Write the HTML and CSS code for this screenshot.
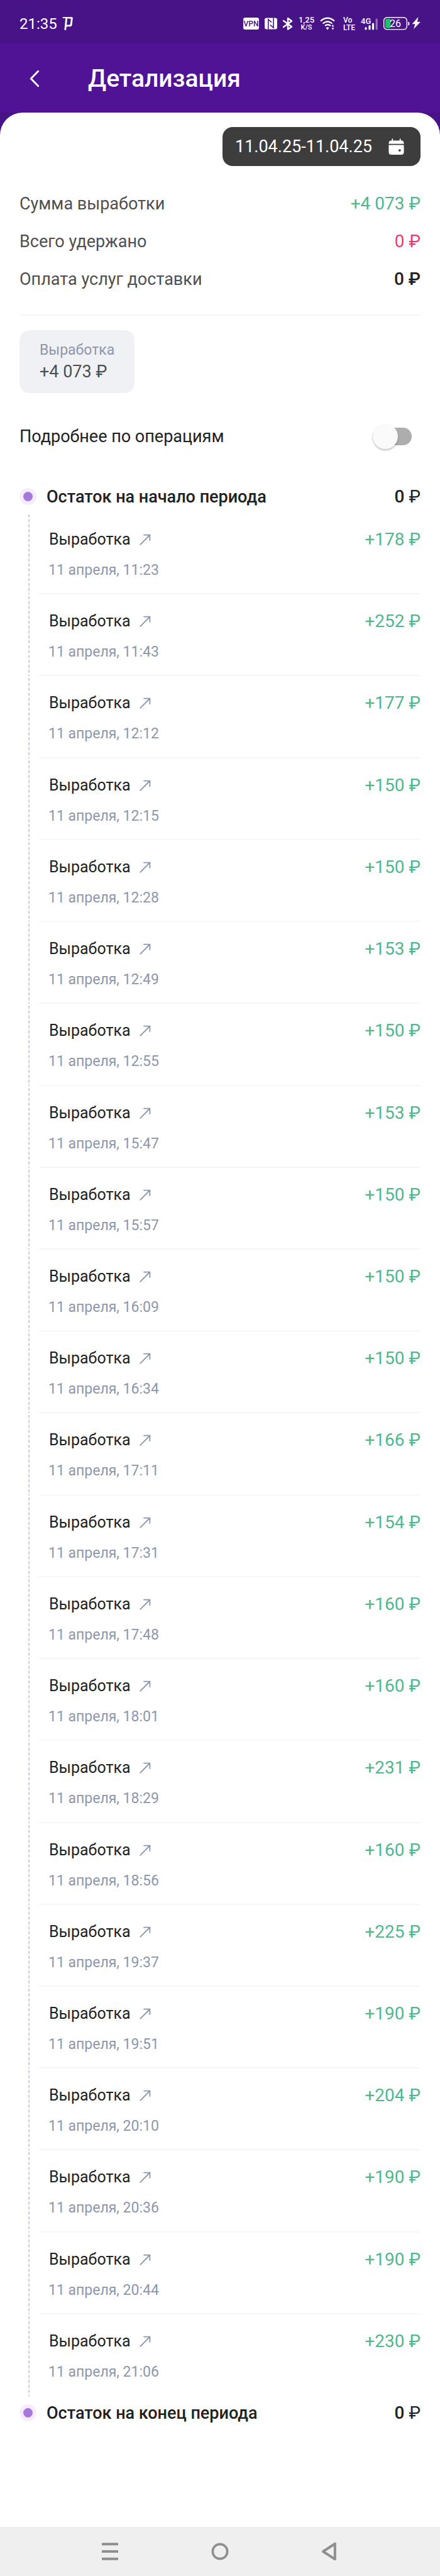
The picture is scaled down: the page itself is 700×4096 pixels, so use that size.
FILE: index.html
```
<!DOCTYPE html>
<html lang="ru">
<head>
    <meta charset="UTF-8">
    <meta name="viewport" content="width=device-width, initial-scale=1.0">
    <title>Детализация</title>
    <link rel="stylesheet" href="styles.css">
</head>
<body>

    <svg class="sprite" aria-hidden="true">
        <symbol id="arrow" viewBox="0 0 18 18">
            <path d="M1.2 16.8 16 2M7 1.6h9.4V10" fill="none" stroke="currentColor" stroke-width="1.8" stroke-linecap="round"/>
        </symbol>
    </svg>

    <div class="status">
        <span class="clock">21:35</span>
        <svg class="status-logo" width="18" height="24" viewBox="0 0 18 24">
            <path d="M0 3 1.6 1H15q2 0 1.8 2L15.6 13.500q-.3 2.700-3 2.700H6.800L6.200 21.800H3.400L5.200 3zM8 3.600 7.100 13.400h4.200q1.400 0 1.600-1.400l.8-7q.1-1.400-1.300-1.400z" fill="#fff" fill-rule="evenodd"/>
        </svg>
        <div class="status-icons">
            <svg width="25" height="24" viewBox="0 0 25 24">
                <rect y="2" width="25" height="19" rx="3" fill="#fff"/>
                <text x="12.500" y="16" class="vpn">VPN</text>
            </svg>
            <svg width="20" height="24" viewBox="0 0 20 24">
                <rect y="2.500" width="20" height="18" rx="3" fill="#fff"/>
                <path d="M5.800 20.500V5L11 9.400M14.100 2.500V18L8.800 13.600" fill="none" stroke="#491388" stroke-width="1.600"/>
            </svg>
            <svg width="16" height="24" viewBox="0 0 16 24">
                <path d="M1 7 14 16.500 8 20.500V3L14 7.500 1 17" fill="none" stroke="#fff" stroke-width="2.400" stroke-linejoin="round" stroke-linecap="round"/>
            </svg>
            <div class="stack stack-speed"><b>1,25</b><small>K/S</small></div>
            <svg class="wifi" width="28" height="24" viewBox="0 0 28 24">
                <path d="M1 7.500Q12 -2 23 7.500M4.500 11.500Q12 5 19.500 11.500M8 15Q12.500 11.500 17 15" fill="none" stroke="#fff" stroke-width="2.300"/>
                <path d="M9.500 18.300Q12 16 14.500 18.300L12 21.500zM18.500 16.200 20.500 12.800 22.500 16.200zM18.500 18.200 20.500 21.600 22.500 18.200z" fill="#fff"/>
            </svg>
            <div class="stack"><b>Vo</b><b>LTE</b></div>
            <svg width="27" height="24" viewBox="0 0 27 24">
                <text x="0" y="12" class="net">4G</text>
                <path d="M8 18.500v1.500M14 15.500v4.500M19.500 12v8" stroke="#fff" stroke-width="3.200" stroke-linecap="round"/>
                <path d="M25.200 5v15" stroke="#9374b8" stroke-width="3.200" stroke-linecap="round"/>
            </svg>
            <svg width="59" height="24" viewBox="0 0 59 24">
                <rect x=".7" y="1.700" width="36.600" height="19.200" rx="5" fill="none" stroke="#fff" stroke-width="1.400"/>
                <rect x="3" y="4" width="8.500" height="14.700" rx="2" fill="#16c665"/>
                <path d="M39.300 8.500q2 .4 2 1.600v3q0 1.200-2 1.600z" fill="#fff"/>
                <text x="10" y="17" class="charge">26</text>
                <path d="M55.500 1 45.500 12.300h5L48 20.300 59 8.800h-5.200z" fill="#fff"/>
            </svg>
        </div>
    </div>

    <header class="header">
        <button class="back" type="button" aria-label="Назад">
            <svg width="16" height="28" viewBox="0 0 16 28">
                <path d="M13.700 2.200 2.200 14l11.500 11.800" fill="none" stroke="#fff" stroke-width="2.900" stroke-linecap="round" stroke-linejoin="round"/>
            </svg>
        </button>
        <h1>Детализация</h1>
    </header>

    <div class="backdrop">
    <main class="panel">
        <button class="period" type="button">
            11.04.25-11.04.25
            <svg width="25" height="27" viewBox="0 0 25 28">
                <path d="M0 9V8q0-4.500 4.500-4.500h.7V1q0-.8.900-.8T7 1v2.500h11V1q0-.8.900-.8t.9.800v2.500h.7Q25 3.500 25 8v1z" fill="#fff"/>
                <path d="M0 11h25v11.500q0 4.500-4.500 4.500h-16Q0 27 0 22.500z" fill="#fff"/>
                <circle cx="18" cy="19.800" r="2" fill="#3d3d3d"/>
            </svg>
        </button>

        <dl class="summary">
            <div><dt>Сумма выработки</dt><dd class="plus">+4 073 ₽</dd></div>
            <div><dt>Всего удержано</dt><dd class="minus">0 ₽</dd></div>
            <div><dt>Оплата услуг доставки</dt><dd class="total">0 ₽</dd></div>
        </dl>

        <div class="card">
            <p class="card-label">Выработка</p>
            <p class="card-value">+4 073 ₽</p>
        </div>

        <div class="details">
            <label for="detailsToggle">Подробнее по операциям</label>
            <input type="checkbox" role="switch" id="detailsToggle" class="toggle">
        </div>

        <div class="balance">
            <span class="dot"></span>
            <h2>Остаток на начало периода</h2>
            <p><b>0</b> ₽</p>
        </div>

        <ul class="operations">
            <li><div class="operation">
                <div><a href="#">Выработка <svg><use href="#arrow"/></svg></a><time>11 апреля, 11:23</time></div>
                <span class="plus">+178 ₽</span>
            </div></li>
            <li><div class="operation">
                <div><a href="#">Выработка <svg><use href="#arrow"/></svg></a><time>11 апреля, 11:43</time></div>
                <span class="plus">+252 ₽</span>
            </div></li>
            <li><div class="operation">
                <div><a href="#">Выработка <svg><use href="#arrow"/></svg></a><time>11 апреля, 12:12</time></div>
                <span class="plus">+177 ₽</span>
            </div></li>
            <li><div class="operation">
                <div><a href="#">Выработка <svg><use href="#arrow"/></svg></a><time>11 апреля, 12:15</time></div>
                <span class="plus">+150 ₽</span>
            </div></li>
            <li><div class="operation">
                <div><a href="#">Выработка <svg><use href="#arrow"/></svg></a><time>11 апреля, 12:28</time></div>
                <span class="plus">+150 ₽</span>
            </div></li>
            <li><div class="operation">
                <div><a href="#">Выработка <svg><use href="#arrow"/></svg></a><time>11 апреля, 12:49</time></div>
                <span class="plus">+153 ₽</span>
            </div></li>
            <li><div class="operation">
                <div><a href="#">Выработка <svg><use href="#arrow"/></svg></a><time>11 апреля, 12:55</time></div>
                <span class="plus">+150 ₽</span>
            </div></li>
            <li><div class="operation">
                <div><a href="#">Выработка <svg><use href="#arrow"/></svg></a><time>11 апреля, 15:47</time></div>
                <span class="plus">+153 ₽</span>
            </div></li>
            <li><div class="operation">
                <div><a href="#">Выработка <svg><use href="#arrow"/></svg></a><time>11 апреля, 15:57</time></div>
                <span class="plus">+150 ₽</span>
            </div></li>
            <li><div class="operation">
                <div><a href="#">Выработка <svg><use href="#arrow"/></svg></a><time>11 апреля, 16:09</time></div>
                <span class="plus">+150 ₽</span>
            </div></li>
            <li><div class="operation">
                <div><a href="#">Выработка <svg><use href="#arrow"/></svg></a><time>11 апреля, 16:34</time></div>
                <span class="plus">+150 ₽</span>
            </div></li>
            <li><div class="operation">
                <div><a href="#">Выработка <svg><use href="#arrow"/></svg></a><time>11 апреля, 17:11</time></div>
                <span class="plus">+166 ₽</span>
            </div></li>
            <li><div class="operation">
                <div><a href="#">Выработка <svg><use href="#arrow"/></svg></a><time>11 апреля, 17:31</time></div>
                <span class="plus">+154 ₽</span>
            </div></li>
            <li><div class="operation">
                <div><a href="#">Выработка <svg><use href="#arrow"/></svg></a><time>11 апреля, 17:48</time></div>
                <span class="plus">+160 ₽</span>
            </div></li>
            <li><div class="operation">
                <div><a href="#">Выработка <svg><use href="#arrow"/></svg></a><time>11 апреля, 18:01</time></div>
                <span class="plus">+160 ₽</span>
            </div></li>
            <li><div class="operation">
                <div><a href="#">Выработка <svg><use href="#arrow"/></svg></a><time>11 апреля, 18:29</time></div>
                <span class="plus">+231 ₽</span>
            </div></li>
            <li><div class="operation">
                <div><a href="#">Выработка <svg><use href="#arrow"/></svg></a><time>11 апреля, 18:56</time></div>
                <span class="plus">+160 ₽</span>
            </div></li>
            <li><div class="operation">
                <div><a href="#">Выработка <svg><use href="#arrow"/></svg></a><time>11 апреля, 19:37</time></div>
                <span class="plus">+225 ₽</span>
            </div></li>
            <li><div class="operation">
                <div><a href="#">Выработка <svg><use href="#arrow"/></svg></a><time>11 апреля, 19:51</time></div>
                <span class="plus">+190 ₽</span>
            </div></li>
            <li><div class="operation">
                <div><a href="#">Выработка <svg><use href="#arrow"/></svg></a><time>11 апреля, 20:10</time></div>
                <span class="plus">+204 ₽</span>
            </div></li>
            <li><div class="operation">
                <div><a href="#">Выработка <svg><use href="#arrow"/></svg></a><time>11 апреля, 20:36</time></div>
                <span class="plus">+190 ₽</span>
            </div></li>
            <li><div class="operation">
                <div><a href="#">Выработка <svg><use href="#arrow"/></svg></a><time>11 апреля, 20:44</time></div>
                <span class="plus">+190 ₽</span>
            </div></li>
            <li><div class="operation">
                <div><a href="#">Выработка <svg><use href="#arrow"/></svg></a><time>11 апреля, 21:06</time></div>
                <span class="plus">+230 ₽</span>
            </div></li>
        </ul>

        <div class="balance">
            <span class="dot"></span>
            <h2>Остаток на конец периода</h2>
            <p><b>0</b> ₽</p>
        </div>
    </main>
    </div>

    <nav class="navbar">
        <button type="button" aria-label="Недавние">
            <svg width="30" height="30" viewBox="0 0 30 30"><path d="M2 3.200h26M2 15h26M2 26.800h26" stroke="#8f8f8f" stroke-width="4"/></svg>
        </button>
        <button type="button" aria-label="Домой">
            <svg width="30" height="30" viewBox="0 0 30 30"><circle cx="15" cy="15" r="11.700" fill="none" stroke="#8f8f8f" stroke-width="3.700"/></svg>
        </button>
        <button type="button" aria-label="Назад">
            <svg width="30" height="30" viewBox="0 0 30 30"><path d="M22.900 2.700v24.600L4 15z" fill="none" stroke="#8f8f8f" stroke-width="4" stroke-linejoin="round"/></svg>
        </button>
    </nav>

</body>
</html>
```
FILE: styles.css
```
* {
  margin: 0;
  padding: 0;
  box-sizing: border-box;
}
body {
  display: flex;
  flex-direction: column;
  min-height: 100vh;
  font-family: Roboto, sans-serif;
  font-size: 27px;
  color: #212121;
  background: #fff;
}
button {
  border: none;
  background: none;
  font-family: inherit;
}
svg {
  display: block;
}
.sprite {
  display: none;
}

/* status bar */
.status {
  display: flex;
  align-items: center;
  height: 70px;
  padding: 6px 31px 0;
  background: #491388;
  color: #fff;
}
.clock {
  font-size: 24px;
}
.status-logo {
  margin-left: 8px;
}
.status-icons {
  display: flex;
  align-items: center;
  gap: 9px;
  margin-left: auto;
}
.stack {
  display: flex;
  flex-direction: column;
  width: 19px;
  font-size: 12px;
  line-height: 12px;
}
.stack b {
  font-weight: 500;
}
.stack-speed {
  align-items: center;
  width: 25px;
}
.stack-speed b {
  font-size: 13px;
}
.stack-speed small {
  font-size: 11px;
  font-weight: 500;
}
.vpn {
  font-size: 12px;
  font-weight: 500;
  text-anchor: middle;
  fill: #491388;
}
.net {
  font-size: 13px;
  font-weight: 500;
  fill: #fff;
}
.charge {
  font-size: 16px;
  fill: #fff;
}

/* header */
.header {
  display: flex;
  align-items: center;
  gap: 62px;
  height: 109px;
  padding: 0 31px;
  background: #501396;
  color: #fff;
}
.header h1 {
  font-size: 39px;
  font-weight: 500;
}
.back {
  display: flex;
  align-items: center;
  justify-content: center;
  width: 47px;
  height: 47px;
}

/* panel */
.backdrop {
  flex: 1;
  display: flex;
  background: linear-gradient(#491388 60px, #fff 60px);
}
.panel {
  flex: 1;
  display: flex;
  flex-direction: column;
  padding: 23px 31px 156px;
  border-radius: 36px 36px 0 0;
  background: #fff;
}
.period {
  display: flex;
  align-items: center;
  gap: 26px;
  align-self: flex-end;
  height: 62px;
  padding: 0 26px 0 20px;
  border-radius: 16px;
  background: #3d3d3d;
  color: #fff;
  font-size: 27px;
}
.summary {
  margin-top: 30px;
  padding-bottom: 26px;
  border-bottom: 2px solid #f6f6f8;
}
.summary div {
  display: flex;
  justify-content: space-between;
  line-height: 60px;
}
.summary dt {
  color: #4f4f4f;
}
.summary dd,
.operation span,
.balance p {
  font-size: 28px;
}
.plus {
  color: #52b788;
}
.minus {
  color: #f2376f;
}
.total {
  font-weight: 500;
}
.card {
  align-self: flex-start;
  margin-top: 23px;
  padding: 16px 32px;
  border-radius: 16px;
  background: #f0f1f4;
}
.card-label {
  font-size: 23px;
  line-height: 32px;
  color: #8d97ac;
}
.card-value {
  line-height: 36px;
  color: #4f4f4f;
}
.details {
  display: flex;
  align-items: center;
  justify-content: space-between;
  height: 40px;
  margin: 49px 0;
  padding-right: 14px;
}
.toggle {
  appearance: none;
  position: relative;
  width: 62px;
  height: 28px;
  border-radius: 14px;
  background: #adadad;
}
.toggle::before {
  content: "";
  position: absolute;
  top: -6px;
  left: 0;
  width: 40px;
  height: 40px;
  border-radius: 50%;
  background: #fafafa;
  box-shadow: 0 2px 3px rgba(0, 0, 0, 0.25);
}
.toggle:checked::before {
  left: 22px;
}

/* timeline */
.balance {
  display: flex;
  align-items: center;
  height: 52px;
  line-height: 34px;
}
.balance h2,
.balance p {
  padding-top: 2px;
}
.balance h2 {
  flex: 1;
  margin-left: 16px;
  font-size: 27px;
  font-weight: 500;
}
.balance b {
  font-weight: 500;
}
.dot {
  width: 27px;
  height: 27px;
  border: 6px solid #f5edff;
  border-radius: 50%;
  background: #a678de;
}
.operations {
  flex: 1;
  display: flex;
  flex-direction: column;
  list-style: none;
}
.operations li {
  flex: 1;
  display: flex;
  padding-left: 31px;
  background: linear-gradient(transparent 40%, #cfced8 40%) 14px 0 / 2px 6% repeat-y;
}
.operation {
  flex: 1;
  display: flex;
  justify-content: space-between;
  padding: 26px 0 20px 15px;
  border-bottom: 2px solid #f6f6f8;
  line-height: 34px;
}
.operations li:last-child .operation {
  border-bottom: none;
}
.operation a {
  display: flex;
  align-items: center;
  gap: 14px;
  padding-left: 1px;
  font-size: 25px;
  color: inherit;
  text-decoration: none;
}
.operation svg {
  width: 18px;
  height: 18px;
  color: #8d97ac;
}
.operation time {
  display: block;
  margin-top: 16px;
  font-size: 23px;
  line-height: 32px;
  color: #8d97ac;
}

/* system navigation */
.navbar {
  display: grid;
  grid-template-columns: repeat(3, 1fr);
  height: 78px;
  padding: 0 87px;
  background: #efefef;
}
.navbar button {
  display: flex;
  align-items: center;
  justify-content: center;
}
```
